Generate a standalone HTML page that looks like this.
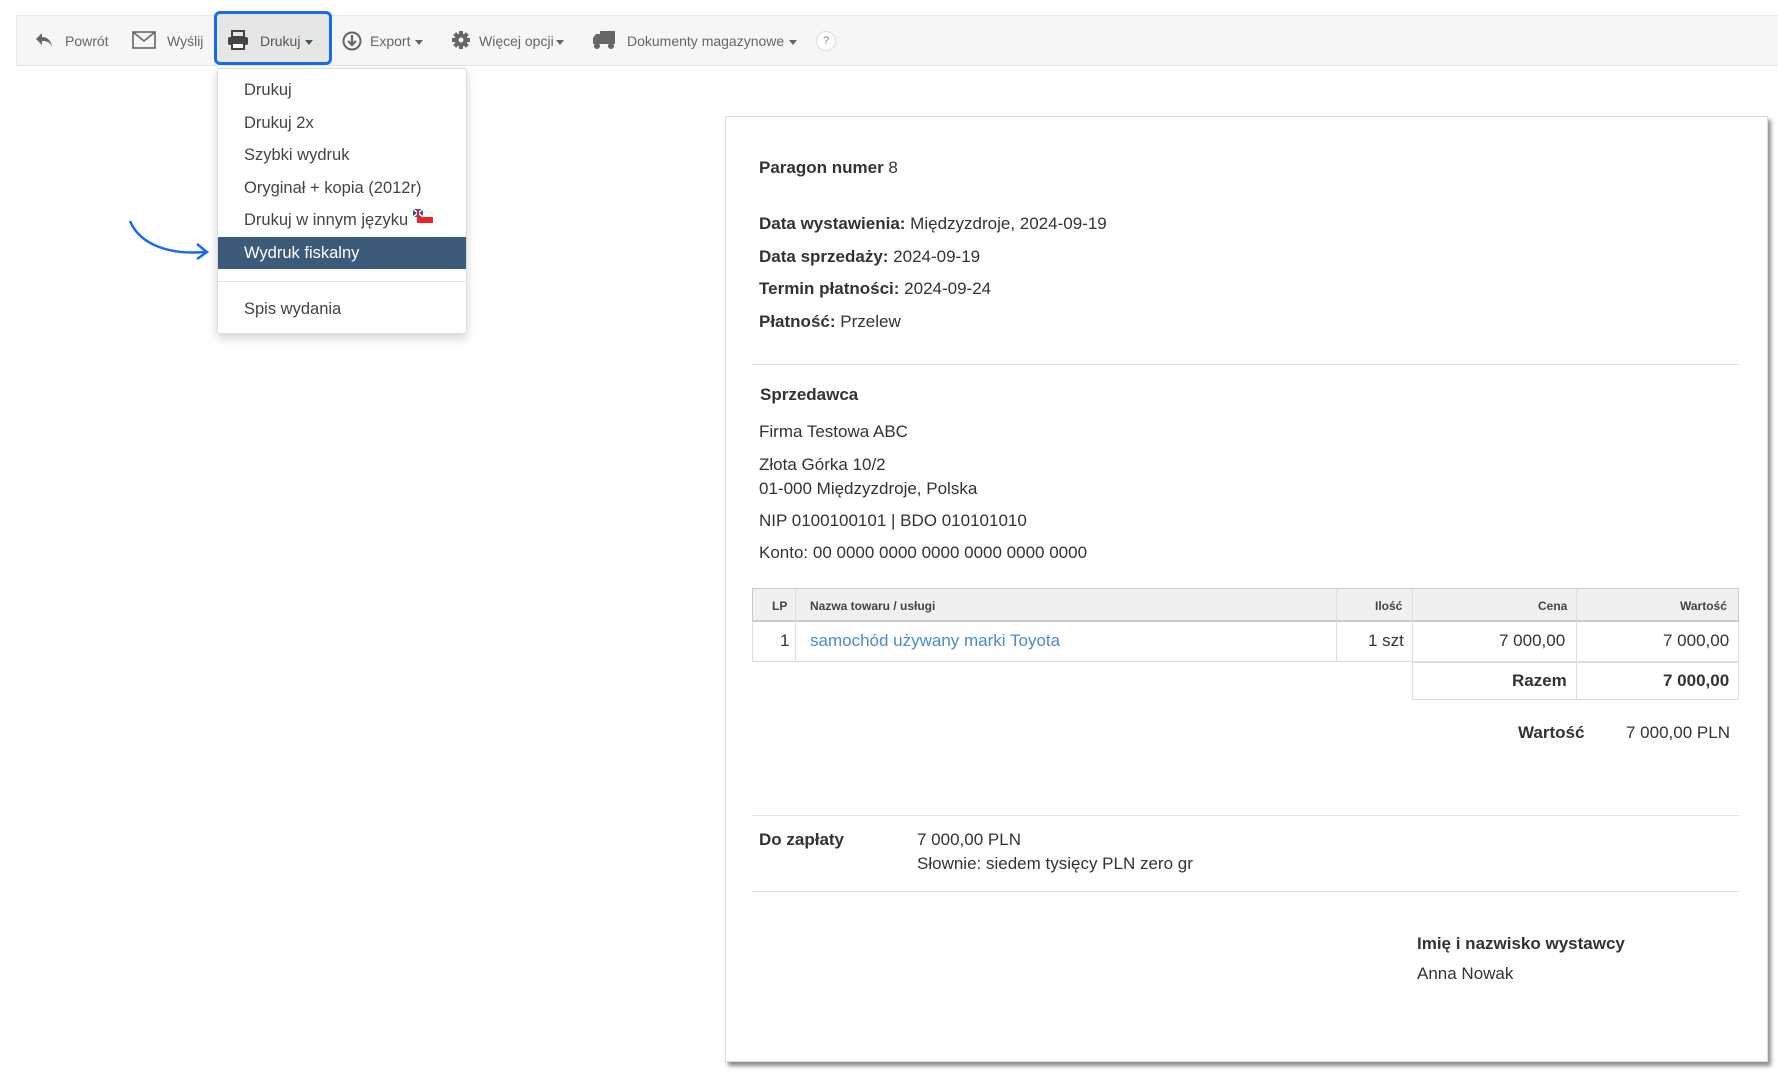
<!DOCTYPE html>
<html><head><meta charset="utf-8"><style>
*{margin:0;padding:0;box-sizing:border-box}
body{width:1778px;height:1080px;background:#fff;font-family:"Liberation Sans",Arial,sans-serif;position:relative;overflow:hidden;color:#333}
.a{position:absolute;white-space:nowrap}
.tb{position:absolute;left:16px;top:15px;width:1762px;height:51px;background:#f6f6f6;border:1px solid #e6e6e6;border-right:none}
.ti{position:absolute;top:32px;font-size:14px;color:#666;line-height:18px}
.car{display:inline-block;width:0;height:0;border-left:4px solid transparent;border-right:4px solid transparent;border-top:5px solid #666;vertical-align:middle;margin-left:5px}
.dd{position:absolute;left:217px;top:68px;width:250px;height:266px;background:#fff;border:1px solid #ddd;border-radius:3px;box-shadow:0 4px 10px rgba(0,0,0,.18)}
.di{position:absolute;left:26px;font-size:16.5px;color:#444}
.paper{position:absolute;left:725px;top:116px;width:1043px;height:946px;background:#fff;border:1px solid #ddd;box-shadow:3px 4px 4px rgba(0,0,0,.45)}
.t{position:absolute;font-size:17px;color:#333;white-space:nowrap}
b{color:#333}
.hr{position:absolute;height:1px;background:#e2e2e2}
</style></head><body>
<div class="tb"></div>
<div class="a" style="left:214px;top:11px;width:118px;height:54px;background:#e6e6e6;border:3px solid #1a6be6;border-radius:6px"></div>
<svg class="a" style="left:34px;top:31px" width="20" height="18" viewBox="0 0 20 18"><path d="M8 2 L2 8 L8 14 V10 C13 10 16 11 18 16 C17 9 13 6 8 6Z" fill="#666"/></svg>
<div class="ti" style="left:65px">Powrót</div>
<svg class="a" style="left:132px;top:31px" width="24" height="18" viewBox="0 0 24 18"><rect x="1" y="1" width="22" height="16" fill="none" stroke="#666" stroke-width="1.6"/><path d="M1 1 L12 10 L23 1" fill="none" stroke="#666" stroke-width="1.6"/></svg>
<div class="ti" style="left:167px">Wyślij</div>
<svg class="a" style="left:227px;top:30px" width="22" height="20" viewBox="0 0 22 20"><rect x="5" y="1" width="12" height="6" fill="none" stroke="#444" stroke-width="2"/><rect x="1" y="7" width="20" height="8" rx="2" fill="#444"/><rect x="5" y="13" width="12" height="6" fill="#fff" stroke="#444" stroke-width="2"/></svg>
<div class="ti" style="left:260px;color:#555">Drukuj<span class="car" style="border-top-color:#555"></span></div>
<svg class="a" style="left:342px;top:31px" width="20" height="20" viewBox="0 0 20 20"><circle cx="10" cy="10" r="8.5" fill="none" stroke="#666" stroke-width="2"/><path d="M10 4 V13 M6 10 L10 14 L14 10" fill="none" stroke="#666" stroke-width="2.2"/></svg>
<div class="ti" style="left:370px">Export<span class="car"></span></div>
<svg class="a" style="left:451px;top:30px" width="20" height="20" viewBox="0 0 20 20"><g fill="#666"><circle cx="10" cy="10" r="6.5"/><rect x="8" y="1" width="4" height="18"/><rect x="1" y="8" width="18" height="4"/><rect x="8" y="1" width="4" height="18" transform="rotate(45 10 10)"/><rect x="8" y="1" width="4" height="18" transform="rotate(-45 10 10)"/></g><circle cx="10" cy="10" r="2.5" fill="#f6f6f6"/></svg>
<div class="ti" style="left:479px">Więcej opcji<span class="car" style="margin-left:2px"></span></div>
<svg class="a" style="left:592px;top:30px" width="24" height="20" viewBox="0 0 24 20"><rect x="8" y="1" width="15" height="13" fill="#666"/><path d="M1 8 L4 4 H8 V14 H1Z" fill="#666"/><circle cx="5" cy="16" r="3" fill="#666"/><circle cx="19" cy="16" r="3" fill="#666"/></svg>
<div class="ti" style="left:627px">Dokumenty magazynowe<span class="car"></span></div>
<div class="a" style="left:816px;top:31px;width:20px;height:20px;border:1px solid #ddd;border-radius:50%;background:#fff;font-size:11px;color:#888;text-align:center;line-height:18px">?</div>

<div class="dd">
<div class="di" style="top:12px">Drukuj</div>
<div class="di" style="top:45px">Drukuj 2x</div>
<div class="di" style="top:77px">Szybki wydruk</div>
<div class="di" style="top:110px">Oryginał + kopia (2012r)</div>
<div class="di" style="top:142px">Drukuj w innym języku <svg width="20" height="14" viewBox="0 0 20 14" style="vertical-align:top;margin-top:-2px"><rect x="0" y="0" width="10" height="8" fill="#2a4c9a"/><path d="M0 0L10 8M10 0L0 8" stroke="#fff" stroke-width="1.5"/><rect x="4" y="0" width="2" height="8" fill="#d22"/><rect x="10" y="3" width="10" height="6" fill="#fff" stroke="#ccc" stroke-width=".5"/><rect x="4" y="8" width="16" height="6" fill="#e22"/></svg></div>
<div class="a" style="left:0;top:168px;width:248px;height:32px;background:#3c5a79"></div>
<div class="di" style="top:175px;color:#fff">Wydruk fiskalny</div>
<div class="a" style="left:0;top:212px;width:248px;height:1px;background:#e5e5e5"></div>
<div class="di" style="top:231px">Spis wydania</div>
</div>
<svg class="a" style="left:125px;top:215px" width="95" height="45" viewBox="0 0 95 45"><path d="M5 6 C15 30 45 40 80 37" fill="none" stroke="#1a6be6" stroke-width="2.5"/><path d="M72 29 L82 37 L72 44" fill="none" stroke="#1a6be6" stroke-width="2.5"/></svg>

<div class="paper"></div>
<div class="t" style="left:759px;top:158px"><b>Paragon numer</b> 8</div>
<div class="t" style="left:759px;top:214px"><b>Data wystawienia:</b> Międzyzdroje, 2024-09-19</div>
<div class="t" style="left:759px;top:247px"><b>Data sprzedaży:</b> 2024-09-19</div>
<div class="t" style="left:759px;top:279px"><b>Termin płatności:</b> 2024-09-24</div>
<div class="t" style="left:759px;top:312px"><b>Płatność:</b> Przelew</div>
<div class="hr" style="left:752px;top:364px;width:987px"></div>
<div class="t" style="left:760px;top:385px"><b>Sprzedawca</b></div>
<div class="t" style="left:759px;top:422px">Firma Testowa ABC</div>
<div class="t" style="left:759px;top:455px">Złota Górka 10/2</div>
<div class="t" style="left:759px;top:479px">01-000 Międzyzdroje, Polska</div>
<div class="t" style="left:759px;top:511px">NIP 0100100101 | BDO 010101010</div>
<div class="t" style="left:759px;top:543px">Konto: 00 0000 0000 0000 0000 0000 0000</div>

<div class="a" style="left:752px;top:588px;width:987px;height:34px;background:#f0f0f0;border:1px solid #ccc;border-bottom:2px solid #ccc"></div>
<div class="a" style="left:752px;top:621px;width:987px;height:41px;border:1px solid #ddd;border-top:none"></div>
<div class="a" style="left:795px;top:588px;width:1px;height:73px;background:#ddd"></div>
<div class="a" style="left:1336px;top:588px;width:1px;height:73px;background:#ddd"></div>
<div class="a" style="left:1412px;top:588px;width:1px;height:112px;background:#ddd"></div>
<div class="a" style="left:1576px;top:588px;width:1px;height:112px;background:#ddd"></div>
<div class="a" style="left:1412px;top:661px;width:327px;height:39px;border:1px solid #ddd;border-top:2px solid #ddd"></div>
<div class="t" style="left:772px;top:599px;font-size:12px;font-weight:bold;color:#444">LP</div>
<div class="t" style="left:810px;top:599px;font-size:12px;font-weight:bold;color:#444">Nazwa towaru / usługi</div>
<div class="t" style="left:1375px;top:599px;font-size:12px;font-weight:bold;color:#444">Ilość</div>
<div class="t" style="left:1538px;top:599px;font-size:12px;font-weight:bold;color:#444">Cena</div>
<div class="t" style="left:1680px;top:599px;font-size:12px;font-weight:bold;color:#444">Wartość</div>
<div class="t" style="left:780px;top:631px">1</div>
<div class="t" style="left:810px;top:631px;color:#4a8bc9">samochód używany marki Toyota</div>
<div class="t" style="left:1368px;top:631px">1 szt</div>
<div class="t" style="left:1499px;top:631px">7 000,00</div>
<div class="t" style="left:1663px;top:631px">7 000,00</div>
<div class="t" style="left:1512px;top:671px"><b>Razem</b></div>
<div class="t" style="left:1663px;top:671px"><b>7 000,00</b></div>
<div class="t" style="left:1518px;top:723px"><b>Wartość</b></div>
<div class="t" style="left:1626px;top:723px">7 000,00 PLN</div>
<div class="hr" style="left:752px;top:815px;width:987px"></div>
<div class="t" style="left:759px;top:830px"><b>Do zapłaty</b></div>
<div class="t" style="left:917px;top:830px">7 000,00 PLN</div>
<div class="t" style="left:917px;top:854px">Słownie: siedem tysięcy PLN zero gr</div>
<div class="hr" style="left:752px;top:891px;width:987px"></div>
<div class="t" style="left:1417px;top:934px"><b>Imię i nazwisko wystawcy</b></div>
<div class="t" style="left:1417px;top:964px">Anna Nowak</div>
</body></html>
